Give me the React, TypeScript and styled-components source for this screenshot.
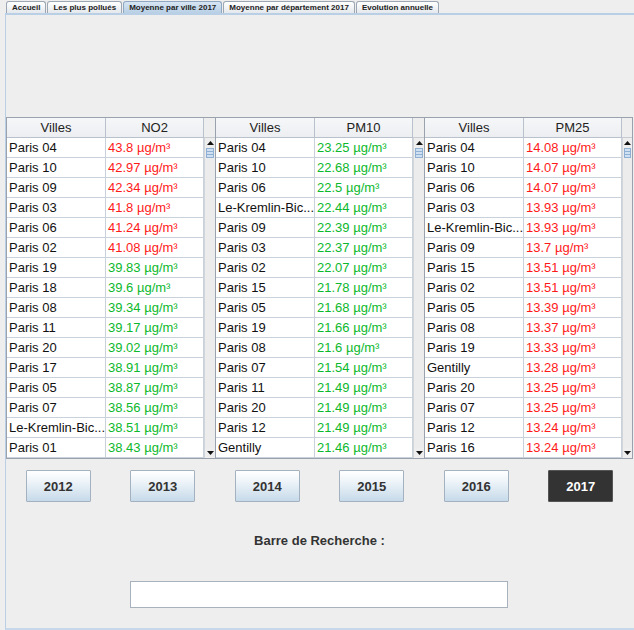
import React from "react";
import styled, { createGlobalStyle, css } from "styled-components";

const GlobalStyle = createGlobalStyle`
  html, body { margin: 0; padding: 0; background: #eeeeee; }
  body { font-family: "Liberation Sans", Arial, sans-serif; }
`;

const Frame = styled.div`
  width: 634px;
  height: 630px;
  display: flex;
  flex-direction: column;
  background: #eeeeee;
  overflow: hidden;
`;

const TabStrip = styled.div`
  height: 13px;
  display: flex;
  align-items: flex-end;
  padding-left: 6px;
  gap: 1px;
`;

const Tab = styled.div<{ $active?: boolean }>`
  height: 12px;
  box-sizing: border-box;
  padding: 0 5px;
  display: flex;
  align-items: center;
  font-size: 8px;
  font-weight: bold;
  color: #222;
  border: 1px solid #9da7b3;
  border-bottom: none;
  border-radius: 3px 3px 0 0;
  background: linear-gradient(#ffffff, #e4e8ec);
  white-space: nowrap;
  ${(p) =>
    p.$active &&
    css`
      background: linear-gradient(#d7e5f3, #b8cfe5);
      border-color: #8fa7c1;
    `}
`;

const Panel = styled.div`
  flex: 1;
  margin-left: 5px;
  border-left: 1px solid #b8cfe5;
  border-top: 2px solid #b8cfe5;
  border-bottom: 2px solid #c6d8ea;
  display: flex;
  flex-direction: column;
  align-items: stretch;
  padding-top: 102px;
`;

const TablesRow = styled.div`
  display: grid;
  grid-template-columns: repeat(3, 209px);
`;

const TableBox = styled.div`
  display: grid;
  grid-template-columns: 99px 98px 11px;
  border: 1px solid #9aa3ad;
  border-right: none;
  background: #eeeeee;
  &:last-child {
    border-right: 1px solid #9aa3ad;
    grid-template-columns: 99px 98px 10px;
  }
`;

const Column = styled.div`
  display: flex;
  flex-direction: column;
`;

const HeadCell = styled.div`
  height: 20px;
  box-sizing: border-box;
  display: flex;
  align-items: center;
  justify-content: center;
  font-size: 13px;
  color: #222;
  background: linear-gradient(#f6f7f9, #eceef1);
  border-right: 1px solid #b9c2cc;
  border-bottom: 1px solid #b9c2cc;
`;

const Cell = styled.div<{ $tone?: "red" | "green" }>`
  height: 20px;
  box-sizing: border-box;
  display: flex;
  align-items: center;
  padding-left: 2px;
  font-size: 13px;
  white-space: nowrap;
  overflow: hidden;
  background: #ffffff;
  border-right: 1px solid #c9d1da;
  border-bottom: 1px solid #c9d1da;
  color: ${(p) => (p.$tone === "red" ? "#ff1a1a" : p.$tone === "green" ? "#0cb82c" : "#111")};
`;

const ScrollCol = styled.div`
  display: flex;
  flex-direction: column;
  background: #eeeeee;
`;

const ScrollCorner = styled.div`
  height: 20px;
  box-sizing: border-box;
  border-bottom: 1px solid #c7ccd2;
  background: #eeeeee;
`;

const Track = styled.div`
  flex: 1;
  display: flex;
  flex-direction: column;
  border-left: 1px solid #d2d6db;
  background: #ececec;
`;

const ArrowBtn = styled.div`
  height: 10px;
  display: flex;
  align-items: center;
  justify-content: center;
  background: #eeeeee;
`;

const Thumb = styled.div`
  height: 10px;
  margin: 0 1px;
  box-sizing: border-box;
  border: 1px solid #8fb0d3;
  background: repeating-linear-gradient(#cfe0f2 0 2px, #8fb0d3 2px 3px);
`;

const TrackFill = styled.div`
  flex: 1;
`;

const ButtonsRow = styled.div`
  display: grid;
  grid-template-columns: repeat(6, 1fr);
  width: 627px;
  margin-top: 11px;
  justify-items: center;
`;

const YearButton = styled.button<{ $active?: boolean }>`
  width: 65px;
  height: 32px;
  padding: 0;
  font-family: "Liberation Sans", Arial, sans-serif;
  font-size: 13px;
  font-weight: bold;
  color: #333;
  border: 1px solid #a3b1c1;
  border-radius: 1px;
  background: linear-gradient(#ffffff 0%, #eef4f9 35%, #c6dae9 100%);
  ${(p) =>
    p.$active &&
    css`
      color: #ffffff;
      background: #333333;
      border-color: #555;
    `}
`;

const SearchLabel = styled.div`
  width: 627px;
  text-align: center;
  margin-top: 31px;
  font-size: 13px;
  font-weight: bold;
  color: #333;
`;

const SearchInput = styled.input`
  display: block;
  width: 378px;
  height: 27px;
  box-sizing: border-box;
  margin: 33px 0 0 124px;
  border: 1px solid #a8b2bd;
  background: #ffffff;
`;

type Row = [string, string];
type Tone = "red" | "green";

const tables: { title: string; rows: Row[]; tone: (i: number) => Tone }[] = [
  {
    title: "NO2",
    rows: [
      ["Paris 04", "43.8"],
      ["Paris 10", "42.97"],
      ["Paris 09", "42.34"],
      ["Paris 03", "41.8"],
      ["Paris 06", "41.24"],
      ["Paris 02", "41.08"],
      ["Paris 19", "39.83"],
      ["Paris 18", "39.6"],
      ["Paris 08", "39.34"],
      ["Paris 11", "39.17"],
      ["Paris 20", "39.02"],
      ["Paris 17", "38.91"],
      ["Paris 05", "38.87"],
      ["Paris 07", "38.56"],
      ["Le-Kremlin-Bic...", "38.51"],
      ["Paris 01", "38.43"],
    ],
    tone: (i) => (i < 6 ? "red" : "green"),
  },
  {
    title: "PM10",
    rows: [
      ["Paris 04", "23.25"],
      ["Paris 10", "22.68"],
      ["Paris 06", "22.5"],
      ["Le-Kremlin-Bic...", "22.44"],
      ["Paris 09", "22.39"],
      ["Paris 03", "22.37"],
      ["Paris 02", "22.07"],
      ["Paris 15", "21.78"],
      ["Paris 05", "21.68"],
      ["Paris 19", "21.66"],
      ["Paris 08", "21.6"],
      ["Paris 07", "21.54"],
      ["Paris 11", "21.49"],
      ["Paris 20", "21.49"],
      ["Paris 12", "21.49"],
      ["Gentilly", "21.46"],
    ],
    tone: () => "green",
  },
  {
    title: "PM25",
    rows: [
      ["Paris 04", "14.08"],
      ["Paris 10", "14.07"],
      ["Paris 06", "14.07"],
      ["Paris 03", "13.93"],
      ["Le-Kremlin-Bic...", "13.93"],
      ["Paris 09", "13.7"],
      ["Paris 15", "13.51"],
      ["Paris 02", "13.51"],
      ["Paris 05", "13.39"],
      ["Paris 08", "13.37"],
      ["Paris 19", "13.33"],
      ["Gentilly", "13.28"],
      ["Paris 20", "13.25"],
      ["Paris 07", "13.25"],
      ["Paris 12", "13.24"],
      ["Paris 16", "13.24"],
    ],
    tone: () => "red",
  },
];

const Arrow = ({ up }: { up?: boolean }) => (
  <svg width="7" height="4" viewBox="0 0 7 4">
    <path d={up ? "M0 4 L3.5 0 L7 4 Z" : "M0 0 L7 0 L3.5 4 Z"} fill="#111" />
  </svg>
);

const Scrollbar = () => (
  <ScrollCol>
    <ScrollCorner />
    <Track>
      <ArrowBtn>
        <Arrow up />
      </ArrowBtn>
      <Thumb />
      <TrackFill />
      <ArrowBtn>
        <Arrow />
      </ArrowBtn>
    </Track>
  </ScrollCol>
);

const tabs = [
  "Accueil",
  "Les plus pollués",
  "Moyenne par ville 2017",
  "Moyenne par département 2017",
  "Evolution annuelle",
];

const years = ["2012", "2013", "2014", "2015", "2016", "2017"];

export default function App() {
  return (
    <>
      <GlobalStyle />
      <Frame>
        <TabStrip>
          {tabs.map((t, i) => (
            <Tab key={t} $active={i === 2}>
              {t}
            </Tab>
          ))}
        </TabStrip>
        <Panel>
          <TablesRow>
            {tables.map((tb) => (
              <TableBox key={tb.title}>
                <Column>
                  <HeadCell>Villes</HeadCell>
                  {tb.rows.map((r, i) => (
                    <Cell key={i}>{r[0]}</Cell>
                  ))}
                </Column>
                <Column>
                  <HeadCell>{tb.title}</HeadCell>
                  {tb.rows.map((r, i) => (
                    <Cell key={i} $tone={tb.tone(i)}>
                      {r[1]} µg/m³
                    </Cell>
                  ))}
                </Column>
                <Scrollbar />
              </TableBox>
            ))}
          </TablesRow>
          <ButtonsRow>
            {years.map((y) => (
              <YearButton key={y} $active={y === "2017"}>
                {y}
              </YearButton>
            ))}
          </ButtonsRow>
          <SearchLabel>Barre de Recherche :</SearchLabel>
          <SearchInput />
        </Panel>
      </Frame>
    </>
  );
}
